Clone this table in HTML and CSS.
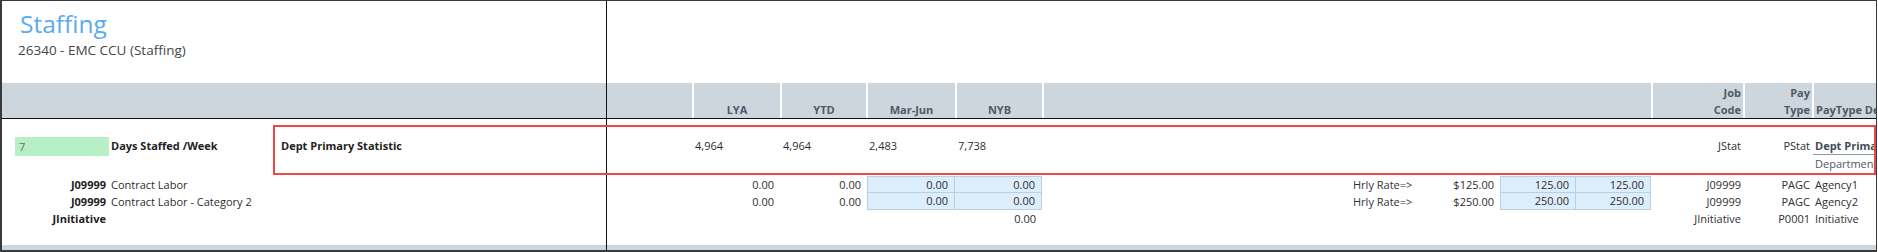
FILE: index.html
```html
<!DOCTYPE html>
<html>
<head>
<meta charset="utf-8">
<title>Staffing</title>
<link rel="stylesheet" href="styles.css">
</head>
<body>
<div class="sheet">
  <!-- title row -->
  <div class="title-cell span3">
    <div class="title">Staffing</div>
    <div class="subtitle">26340 - EMC CCU (Staffing)</div>
  </div>
  <div class="vdiv"></div>
  <div class="span13"></div>

  <!-- header row -->
  <div class="hd span3"></div>
  <div class="vdiv"></div>
  <div class="hd"></div>
  <div class="hd sep c"><span>LYA</span></div>
  <div class="hd sep c"><span>YTD</span></div>
  <div class="hd sep c"><span>Mar-Jun</span></div>
  <div class="hd sep c"><span>NYB</span></div>
  <div class="hd sep span5"></div>
  <div class="hd sep r"><span>Job<br>Code</span></div>
  <div class="hd sep r"><span>Pay<br>Type</span></div>
  <div class="hd sep l"><span>PayType Description</span></div>

  <div class="hline"></div>

  <!-- statistic row -->
  <div class="cell first code-input"><div class="input">7</div></div>
  <div class="cell first name b">Days Staffed /Week</div>
  <div class="cell first desc b">Dept Primary Statistic</div>
  <div class="vdiv"></div>
  <div class="cell first"></div>
  <div class="cell first lnum">4,964</div>
  <div class="cell first lnum">4,964</div>
  <div class="cell first lnum">2,483</div>
  <div class="cell first lnum">7,738</div>
  <div class="cell first span5"></div>
  <div class="cell first rt">JStat</div>
  <div class="cell first rt">PStat</div>
  <div class="cell first ptd">
    <div class="stat-name">Dept Primary Statistic</div>
    <div class="stat-sub">Department Stat</div>
  </div>

  <!-- contract labor -->
  <div class="cell code b">J09999</div>
  <div class="cell name">Contract Labor</div>
  <div class="cell"></div>
  <div class="vdiv"></div>
  <div class="cell"></div>
  <div class="cell num">0.00</div>
  <div class="cell num y">0.00</div>
  <div class="cell num blue bl bt mj">0.00</div>
  <div class="cell num blue bt">0.00</div>
  <div class="cell"></div>
  <div class="cell hrly">Hrly Rate=&gt;</div>
  <div class="cell num">$125.00</div>
  <div class="cell num blue bl bt">125.00</div>
  <div class="cell num blue bt">125.00</div>
  <div class="cell rt">J09999</div>
  <div class="cell rt">PAGC</div>
  <div class="cell ptd">Agency1</div>

  <!-- contract labor cat 2 -->
  <div class="cell code b">J09999</div>
  <div class="cell name">Contract Labor - Category 2</div>
  <div class="cell"></div>
  <div class="vdiv"></div>
  <div class="cell"></div>
  <div class="cell num">0.00</div>
  <div class="cell num y">0.00</div>
  <div class="cell num blue bl mj">0.00</div>
  <div class="cell num blue">0.00</div>
  <div class="cell"></div>
  <div class="cell hrly">Hrly Rate=&gt;</div>
  <div class="cell num">$250.00</div>
  <div class="cell num blue bl">250.00</div>
  <div class="cell num blue">250.00</div>
  <div class="cell rt">J09999</div>
  <div class="cell rt">PAGC</div>
  <div class="cell ptd">Agency2</div>

  <!-- initiative -->
  <div class="cell code b">JInitiative</div>
  <div class="cell span2"></div>
  <div class="vdiv"></div>
  <div class="cell"></div>
  <div class="cell"></div>
  <div class="cell"></div>
  <div class="cell"></div>
  <div class="cell num">0.00</div>
  <div class="cell span5"></div>
  <div class="cell rt">JInitiative</div>
  <div class="cell rt">P0001</div>
  <div class="cell ptd">Initiative</div>

  <!-- spacer -->
  <div class="span3"></div>
  <div class="vdiv"></div>
  <div class="span13"></div>

  <!-- footer band -->
  <div class="foot span3"></div>
  <div class="vdiv"></div>
  <div class="foot span13"></div>

  <div class="highlight"></div>
</div>
</body>
</html>
```

FILE: styles.css
```css
html, body {
  margin: 0;
  padding: 0;
  background: #ffffff;
}

body {
  font-family: "Open Sans", "Noto Sans", sans-serif;
  font-size: 11px;
  color: #2e2e2e;
}

.sheet {
  position: relative;
  box-sizing: border-box;
  width: 1877px;
  height: 252px;
  border-top: 1px solid #3a3a3a;
  border-left: 2px solid #3a3a3a;
  border-right: 1px solid #3a3a3a;
  border-bottom: 2px solid #3a3a3a;
  display: grid;
  grid-template-columns: 107px 164px 333px 1px 85px 88px 86px 89px 87px 308px 90px 60px 76px 75px 92px 69px 64px;
  grid-template-rows: 82px 35px 1px 57px 17px 17px 17px 18px 5px;
}

.span2 { grid-column: span 2; }
.span3 { grid-column: span 3; }
.span5 { grid-column: span 5; }
.span13 { grid-column: span 13; }

.vdiv {
  background: #111111;
}

/* title */
.title-cell {
  padding: 9px 0 0 16px;
}

.title {
  font-size: 24.5px;
  line-height: 28px;
  color: #5aaaf0;
  margin-left: 2px;
  font-weight: 400;
}

.subtitle {
  margin-top: 3px;
  font-size: 13.5px;
  line-height: 18px;
  color: #454545;
}

/* header band */
.hd {
  box-sizing: border-box;
  background: #cdd6dd;
  display: flex;
  align-items: flex-end;
  font-weight: 700;
  line-height: 17px;
  color: #4d5a66;
  overflow: hidden;
  white-space: nowrap;
}

.hd.sep {
  border-left: 2px solid #ffffff;
}

.hd.c {
  justify-content: center;
  text-align: center;
}

.hd.r {
  justify-content: flex-end;
  text-align: right;
  padding-right: 2px;
}

.hd.l {
  padding-left: 2px;
}

.hline {
  grid-column: 1 / -1;
  background: #111111;
}

/* body cells */
.cell {
  box-sizing: border-box;
  line-height: 17px;
  white-space: nowrap;
  overflow: hidden;
}

.cell.first {
  padding-top: 18px;
}

.b {
  font-weight: 700;
  color: #222222;
}

.code {
  text-align: right;
  padding-right: 3px;
}

.code-input {
  padding-left: 13px;
}

.input {
  box-sizing: border-box;
  width: 94px;
  height: 19px;
  line-height: 19px;
  padding-left: 4px;
  background: #b7efc6;
  color: #6a6a6a;
}

.name {
  padding-left: 2px;
}

.desc {
  padding-left: 8px;
}

.lnum {
  padding-left: 3px;
}

.num {
  text-align: right;
  padding-right: 6px;
}

.num.y {
  padding-right: 5px;
}

.blue {
  background: #dcedfc;
  border-right: 1px solid #b6d0e4;
  border-bottom: 1px solid #b6d0e4;
  line-height: 16px;
}

.blue.bl {
  border-left: 1px solid #b6d0e4;
}

.blue.bt {
  border-top: 1px solid #b6d0e4;
  line-height: 15px;
}

.blue.mj {
  margin-left: 1px;
}

.hrly {
  padding-left: 3px;
  color: #333333;
}

.rt {
  text-align: right;
  padding-right: 2px;
}

.ptd {
  padding-left: 3px;
}

.stat-name {
  margin-left: -2px;
  padding-left: 2px;
  font-weight: 700;
  color: #3f4c58;
  border-bottom: 1px solid #8a9aa8;
  line-height: 17px;
}

.stat-sub {
  color: #4d5a66;
  line-height: 17px;
}

.foot {
  background: #cdd6dd;
}

/* review highlight drawn over the grid */
.highlight {
  position: absolute;
  left: 271px;
  top: 124px;
  width: 1603px;
  height: 50px;
  box-sizing: border-box;
  border: 2px solid #ef4646;
  pointer-events: none;
}
```
